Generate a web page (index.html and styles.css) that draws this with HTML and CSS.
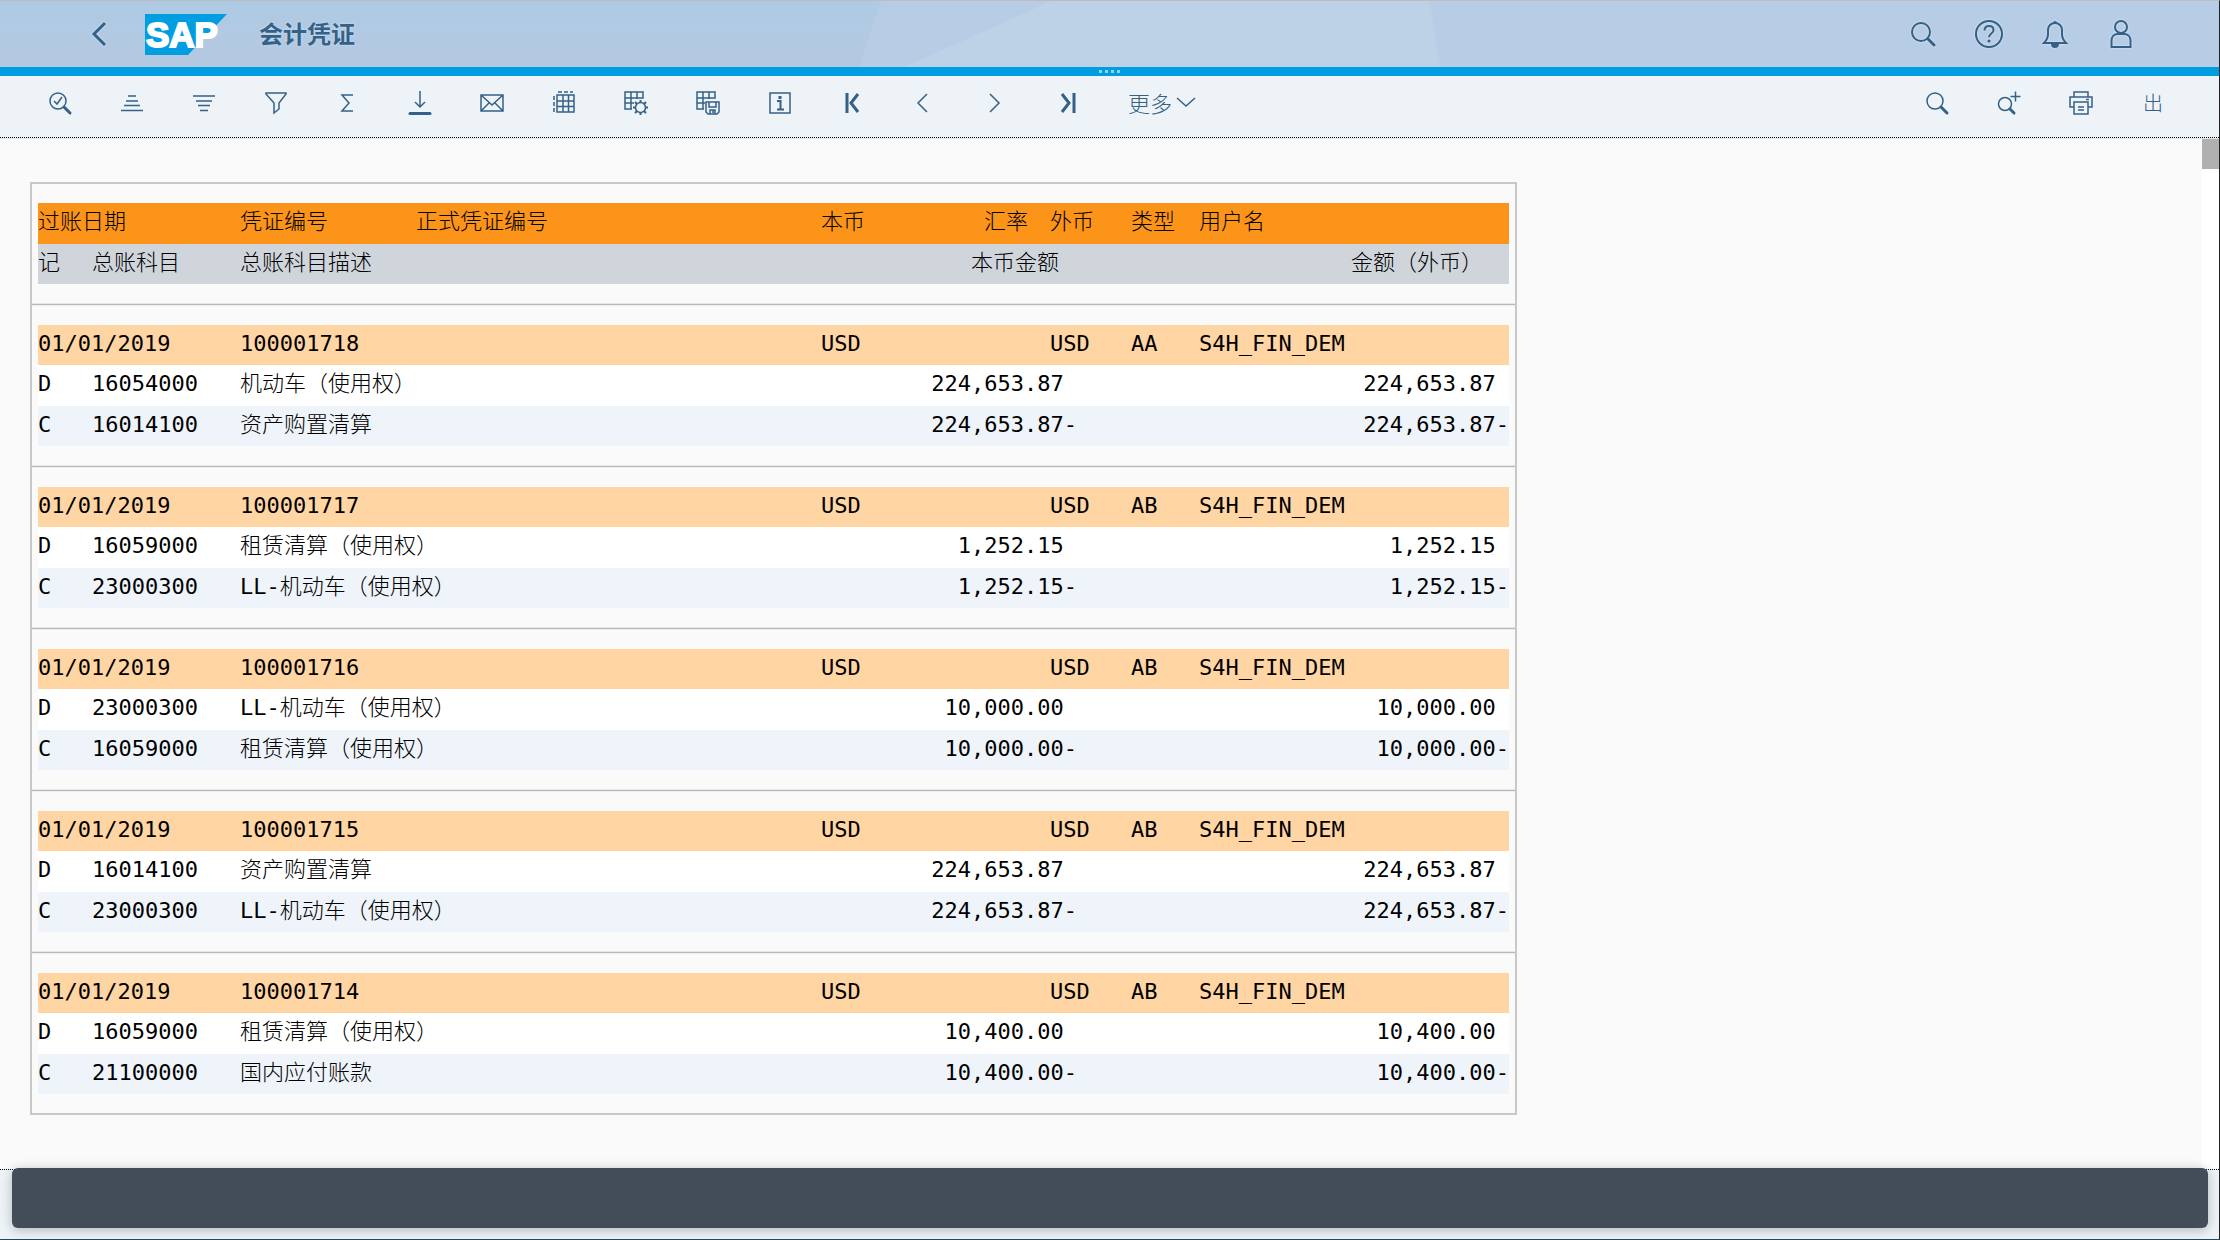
FILE: index.html
```html
<!DOCTYPE html>
<html lang="zh-CN">
<head>
<meta charset="utf-8">
<title>会计凭证</title>
<link rel="stylesheet" href="styles.css">
</head>
<body>
<header class="shell">
  <svg class="shell-art" viewBox="0 0 2220 66" preserveAspectRatio="none" aria-hidden="true">
    <polygon class="facet" points="881,0 2220,0 2220,66 860,66"/>
    <polygon class="facet-bright" points="1052,0 1430,0 1441,66 905,66"/>
  </svg>
  <button class="back" aria-label="返回"><svg width="16" height="26" viewBox="0 0 16 26"><path class="thick" d="M14 2 3 13l11 11"/></svg></button>
  <svg class="logo" width="82" height="41" viewBox="0 0 82 41" role="img" aria-label="SAP">
    <path class="logo-bg" d="M0 0h82L43 41H0z"/>
    <text class="logo-text" x="1" y="33">SAP</text>
  </svg>
  <h1 class="title">会计凭证</h1>
  <nav class="shell-actions">
    <button aria-label="搜索"><svg width="28" height="28" viewBox="0 0 28 28"><circle cx="12" cy="12" r="9"/><path class="handle" d="m19 19 6 6"/></svg></button>
    <button aria-label="帮助"><svg width="30" height="30" viewBox="0 0 30 30"><circle cx="15" cy="15" r="13"/><path d="M10.500 11.500c0-3 2-4.500 4.500-4.500s4.500 1.500 4.500 4.200c0 3.300-4.500 3.300-4.500 7"/><circle class="solid" cx="15" cy="22" r="1.600"/></svg></button>
    <button aria-label="通知"><svg width="28" height="30" viewBox="0 0 28 30"><path d="M3 24c3-3 4-5 4-9V11c0-4 3-7 7-7s7 3 7 7v4c0 4 1 6 4 9z"/><path class="solid" d="M12 4a2 2 0 0 1 4 0zM10 25h8a4 4 0 0 1-8 0zM2 23h24v2H2z"/></svg></button>
    <button aria-label="用户"><svg width="28" height="30" viewBox="0 0 28 30"><circle cx="14" cy="8" r="6"/><path d="M4.500 28V22c0-5 3-7 6-7h7c3 0 6 2 6 7v6z"/></svg></button>
  </nav>
</header>
<div class="handlebar"><i></i><i></i><i></i><i></i></div>
<div class="toolbar">
  <button aria-label="明细"><svg width="26" height="26" viewBox="0 0 26 26"><circle cx="11" cy="11" r="8"/><path class="handle" d="m17 17 6 6"/><path d="m7 11 3 3 5-7"/></svg></button>
  <button aria-label="升序"><svg width="26" height="26" viewBox="0 0 26 26"><path d="M9 6h8M7 11h12M5 15.500h16M2 20.500h22"/></svg></button>
  <button aria-label="降序"><svg width="26" height="26" viewBox="0 0 26 26"><path d="M2 6h22M5 11h16M7 15.500h12M9 20.500h8"/></svg></button>
  <button aria-label="过滤"><svg width="26" height="26" viewBox="0 0 26 26"><path d="M3 3h20v1l-7 9v6l-5 4V13L3 4z"/></svg></button>
  <button aria-label="合计"><svg width="26" height="26" viewBox="0 0 26 26"><path d="M18 5H7l7 8-7 8h11"/></svg></button>
  <button aria-label="导出"><svg width="26" height="26" viewBox="0 0 26 26"><path d="M13 1v16M8 12l5 5 5-5"/><path class="bar" d="M3 23.500h20"/></svg></button>
  <button aria-label="邮件"><svg width="26" height="26" viewBox="0 0 26 26"><path d="M2 5h22v16H2zM2 5l11 10L24 5M2 21l8-8M24 21l-8-8"/></svg></button>
  <button aria-label="表格"><svg width="26" height="26" viewBox="0 0 26 26"><path d="M6 5h17v17H6zM6 11h17M6 16.500h17M12 5v17M17.500 5v17M7 2h4M13 2h4M19 2h3M3 6v4M3 12v4M3 18v4"/></svg></button>
  <button aria-label="更改布局"><svg width="26" height="26" viewBox="0 0 26 26"><path d="M9 19H2V2h18v6H2M2 13h9M8 2v17M14 2v7"/><circle cx="17.500" cy="17.500" r="5"/><path class="teeth" d="M17.500 12.500V10M17.500 22.500V25M12.500 17.500H10M22.500 17.500H25M14 14l-2-2M21 14l2-2M14 21l-2 2M21 21l2 2"/></svg></button>
  <button aria-label="保存布局"><svg width="26" height="26" viewBox="0 0 26 26"><path d="M9 19H2V2h18v6H2M2 13h8M8 2v17M14 2v7M11 12h13v10l-2 2H13l-2-2zM14 12v5h7v-5M15 24v-4h5v4M18 20v3"/></svg></button>
  <button aria-label="信息"><svg width="26" height="26" viewBox="0 0 26 26"><path d="M3 3h20v20H3z"/><path class="serif" d="M10 11h3.500v8M10 19.500h7"/><path class="solid" d="M11.500 6h3v3h-3z"/></svg></button>
  <button aria-label="第一列"><svg width="26" height="26" viewBox="0 0 26 26"><path class="thick" d="M8 3v20M19 4l-7 9 7 9"/></svg></button>
  <button aria-label="左列"><svg width="26" height="26" viewBox="0 0 26 26"><path d="m16 4-9 9 9 9"/></svg></button>
  <button aria-label="右列"><svg width="26" height="26" viewBox="0 0 26 26"><path d="m7 4 9 9-9 9"/></svg></button>
  <button aria-label="最后一列"><svg width="26" height="26" viewBox="0 0 26 26"><path class="thick" d="M19 3v20M7 4l7 9-7 9"/></svg></button>
  <button class="more">更多<svg width="20" height="20" viewBox="0 0 20 20"><path d="m1 6 9 8 9-8"/></svg></button>
  <span class="spacer"></span>
  <button aria-label="查找"><svg width="26" height="26" viewBox="0 0 26 26"><circle cx="11" cy="11" r="8"/><path class="handle" d="m17 17 6 6"/></svg></button>
  <button aria-label="查找下一个"><svg width="28" height="26" viewBox="0 0 28 26"><circle cx="10" cy="14" r="6.500"/><path class="handle" d="m15 19 4 4"/><path d="M20.500 1.500v10M15.500 6.500h10"/></svg></button>
  <button aria-label="打印"><svg width="26" height="26" viewBox="0 0 26 26"><path d="M6 7V2h14v5M6 17H2V7h22v10h-4M6 12h14v12H6zM10 17h6M10 20h6M18 9.500h3"/></svg></button>
  <button class="exit">出</button>
</div>
<main class="content">
  <div class="scroller">
    <div class="report">
      <table>
        <colgroup><col class="c-mark"><col class="c-account"><col class="c-doc"><col class="c-official"><col class="c-rate"><col class="c-rategap"><col class="c-fcur"><col class="c-fcur2"><col class="c-type"><col class="c-user"></colgroup>
        <thead>
          <tr class="head"><th colspan="2">过账日期</th><th>凭证编号</th><th>正式凭证编号</th><th><span class="pair"><span>本币</span><span>汇率</span></span></th><th></th><th colspan="2">外币</th><th>类型</th><th>用户名</th></tr>
          <tr class="subhead"><th>记</th><th>总账科目</th><th colspan="2">总账科目描述</th><th class="local" colspan="3">本币金额</th><th class="foreign" colspan="3">金额（外币）</th></tr>
        </thead>
        <tbody>
          <tr class="gap"><td colspan="10"><hr></td></tr>
          <tr class="doc"><td colspan="2">01/01/2019</td><td>100001718</td><td></td><td>USD</td><td></td><td colspan="2">USD</td><td>AA</td><td>S4H_FIN_DEM</td></tr>
          <tr class="debit"><td>D</td><td>16054000</td><td colspan="2">机动车（使用权）</td><td class="num" colspan="3">224,653.87 </td><td class="num" colspan="3">224,653.87 </td></tr>
          <tr class="credit"><td>C</td><td>16014100</td><td colspan="2">资产购置清算</td><td class="num" colspan="3">224,653.87-</td><td class="num" colspan="3">224,653.87-</td></tr>
        </tbody>
        <tbody>
          <tr class="gap"><td colspan="10"><hr></td></tr>
          <tr class="doc"><td colspan="2">01/01/2019</td><td>100001717</td><td></td><td>USD</td><td></td><td colspan="2">USD</td><td>AB</td><td>S4H_FIN_DEM</td></tr>
          <tr class="debit"><td>D</td><td>16059000</td><td colspan="2">租赁清算（使用权）</td><td class="num" colspan="3">1,252.15 </td><td class="num" colspan="3">1,252.15 </td></tr>
          <tr class="credit"><td>C</td><td>23000300</td><td colspan="2">LL-机动车（使用权）</td><td class="num" colspan="3">1,252.15-</td><td class="num" colspan="3">1,252.15-</td></tr>
        </tbody>
        <tbody>
          <tr class="gap"><td colspan="10"><hr></td></tr>
          <tr class="doc"><td colspan="2">01/01/2019</td><td>100001716</td><td></td><td>USD</td><td></td><td colspan="2">USD</td><td>AB</td><td>S4H_FIN_DEM</td></tr>
          <tr class="debit"><td>D</td><td>23000300</td><td colspan="2">LL-机动车（使用权）</td><td class="num" colspan="3">10,000.00 </td><td class="num" colspan="3">10,000.00 </td></tr>
          <tr class="credit"><td>C</td><td>16059000</td><td colspan="2">租赁清算（使用权）</td><td class="num" colspan="3">10,000.00-</td><td class="num" colspan="3">10,000.00-</td></tr>
        </tbody>
        <tbody>
          <tr class="gap"><td colspan="10"><hr></td></tr>
          <tr class="doc"><td colspan="2">01/01/2019</td><td>100001715</td><td></td><td>USD</td><td></td><td colspan="2">USD</td><td>AB</td><td>S4H_FIN_DEM</td></tr>
          <tr class="debit"><td>D</td><td>16014100</td><td colspan="2">资产购置清算</td><td class="num" colspan="3">224,653.87 </td><td class="num" colspan="3">224,653.87 </td></tr>
          <tr class="credit"><td>C</td><td>23000300</td><td colspan="2">LL-机动车（使用权）</td><td class="num" colspan="3">224,653.87-</td><td class="num" colspan="3">224,653.87-</td></tr>
        </tbody>
        <tbody>
          <tr class="gap"><td colspan="10"><hr></td></tr>
          <tr class="doc"><td colspan="2">01/01/2019</td><td>100001714</td><td></td><td>USD</td><td></td><td colspan="2">USD</td><td>AB</td><td>S4H_FIN_DEM</td></tr>
          <tr class="debit"><td>D</td><td>16059000</td><td colspan="2">租赁清算（使用权）</td><td class="num" colspan="3">10,400.00 </td><td class="num" colspan="3">10,400.00 </td></tr>
          <tr class="credit"><td>C</td><td>21100000</td><td colspan="2">国内应付账款</td><td class="num" colspan="3">10,400.00-</td><td class="num" colspan="3">10,400.00-</td></tr>
        </tbody>
      </table>
    </div>
  </div>
  <div class="track"><div class="thumb"></div></div>
</main>
<footer class="footer"><div class="message" role="status"></div></footer>
</body>
</html>
```

FILE: styles.css
```css
* { box-sizing: border-box; }

body {
  margin: 0;
  min-height: 100vh;
  display: flex;
  flex-direction: column;
  background: #fafafa;
  border-top: 1px solid #bdbdbd;
  border-right: 1px solid #222;
  border-bottom: 1px solid #24485c;
  font-family: "Liberation Sans", "Noto Sans CJK SC", sans-serif;
}

button {
  border: 0;
  padding: 0;
  background: none;
  color: #346187;
  display: flex;
  align-items: center;
  justify-content: center;
}

svg { fill: none; stroke: #346187; stroke-width: 1.5; }
.solid { fill: #346187; stroke: none; }
.thick { stroke-width: 3; }
.serif, .teeth { stroke-width: 2; }
.handle { stroke-width: 3; stroke-linecap: round; }
.bar { stroke-width: 3; stroke-linecap: round; }

/* Shell header */
.shell {
  position: relative;
  height: 66px;
  display: flex;
  align-items: center;
  padding: 0 65px 0 90px;
  background: linear-gradient(#aecae4, #b3c9e2 60%);
}
.shell-art {
  position: absolute;
  inset: 0;
  width: 100%;
  height: 100%;
  stroke: none;
}
.facet { fill: #b7cde5; }
.facet-bright { fill: #bdd2e7; }
.shell > :not(.shell-art) { position: relative; }
.shell button svg { stroke-width: 2; filter: drop-shadow(0 0 1px #e0ecf8); }
.back { width: 18px; }
.logo { margin-left: 37px; stroke: none; }
.logo-bg { fill: #009de0; }
.logo-text {
  fill: #fff;
  stroke: #fff;
  stroke-width: 2;
  font: bold 35px "Liberation Sans Narrow", "Liberation Sans", sans-serif;
}
.title {
  margin: 0 0 2px 32px;
  font: bold 24px/36px "Noto Sans CJK SC", sans-serif;
  color: #346187;
  text-shadow: 0 0 2px #dceaf6;
}
.shell-actions { display: flex; margin-left: auto; }
.shell-actions button { width: 66px; height: 48px; }

.handlebar {
  height: 9px;
  background: #009de0;
  display: flex;
  align-items: center;
  justify-content: center;
  gap: 3px;
}
.handlebar i { width: 3px; height: 3px; background: #8fd2f2; }

/* Application toolbar */
.toolbar {
  display: flex;
  align-items: center;
  height: 62px;
  margin-bottom: 1px;
  padding: 0 30px 7px 24px;
  background: #eef3f8;
  border-bottom: 1px dotted #000;
  box-shadow: 0 1px #dfe8ef;
}
.toolbar button { width: 72px; height: 48px; }
.toolbar .more {
  width: 92px;
  padding-bottom: 2px;
  margin-left: 12px;
  gap: 4px;
  font: 300 22px/32px "Noto Sans CJK SC", sans-serif;
}
.toolbar .exit { font: 300 20px/32px "Noto Sans CJK SC", sans-serif; }
.spacer { flex: 1; }

/* List output */
.content { flex: 1; display: flex; }
.scroller { flex: 1; min-width: 0; padding: 43px 30px 54px; overflow-x: auto; }
.track { width: 17px; background: #fff; }
.thumb { height: 30px; background: #b0b0b0; }

.report {
  width: max-content;
  padding: 19px 6px;
  border: 2px solid #c8c8c8;
}
table { width: 1471px; table-layout: fixed; border-spacing: 0; }
.c-mark { width: 54px; }
.c-account { width: 148px; }
.c-doc { width: 176px; }
.c-official { width: 405px; }
.c-rate { width: 207px; }
.c-rategap { width: 22px; }
.c-fcur { width: 27px; }
.c-fcur2 { width: 54px; }
.c-type { width: 68px; }
.c-user { width: 310px; }

th, td {
  height: 40px;
  padding: 0 0 3px;
  text-align: left;
  white-space: pre;
  font: 300 22px/36px "DejaVu Sans Mono", "Noto Sans CJK SC", monospace;
  color: #000;
}
.head th, .debit td { height: 41px; }
.head { background: #fb9419; }
.subhead { background: #d0d5dc; }
.doc { background: #ffd5a4; }
.debit { background: #fff; }
.credit { background: #eef4f9; }
.pair { display: flex; justify-content: space-between; }
.num { text-align: right; }
.subhead .local { text-align: right; padding-right: 18px; }
.subhead .foreign { text-align: right; padding-right: 26px; }

.gap td { height: 41px; padding: 0; line-height: 0; }
.gap hr {
  height: 3px;
  margin: 0 -6px;
  border: 0;
  border-top: 1px solid #e8e8e8;
  border-bottom: 1px solid #eee;
  background: #b8b8b8;
}

/* Message area */
.footer {
  height: 70px;
  padding: 0 11px 11px 12px;
  display: flex;
  background: #eef3f8;
  border-top: 1px dotted #000;
}
.message {
  flex: 1;
  margin-top: -2px;
  border-radius: 6px;
  background: #424d59;
  box-shadow: 0 2px 12px rgba(0, 0, 0, .25);
}
```
